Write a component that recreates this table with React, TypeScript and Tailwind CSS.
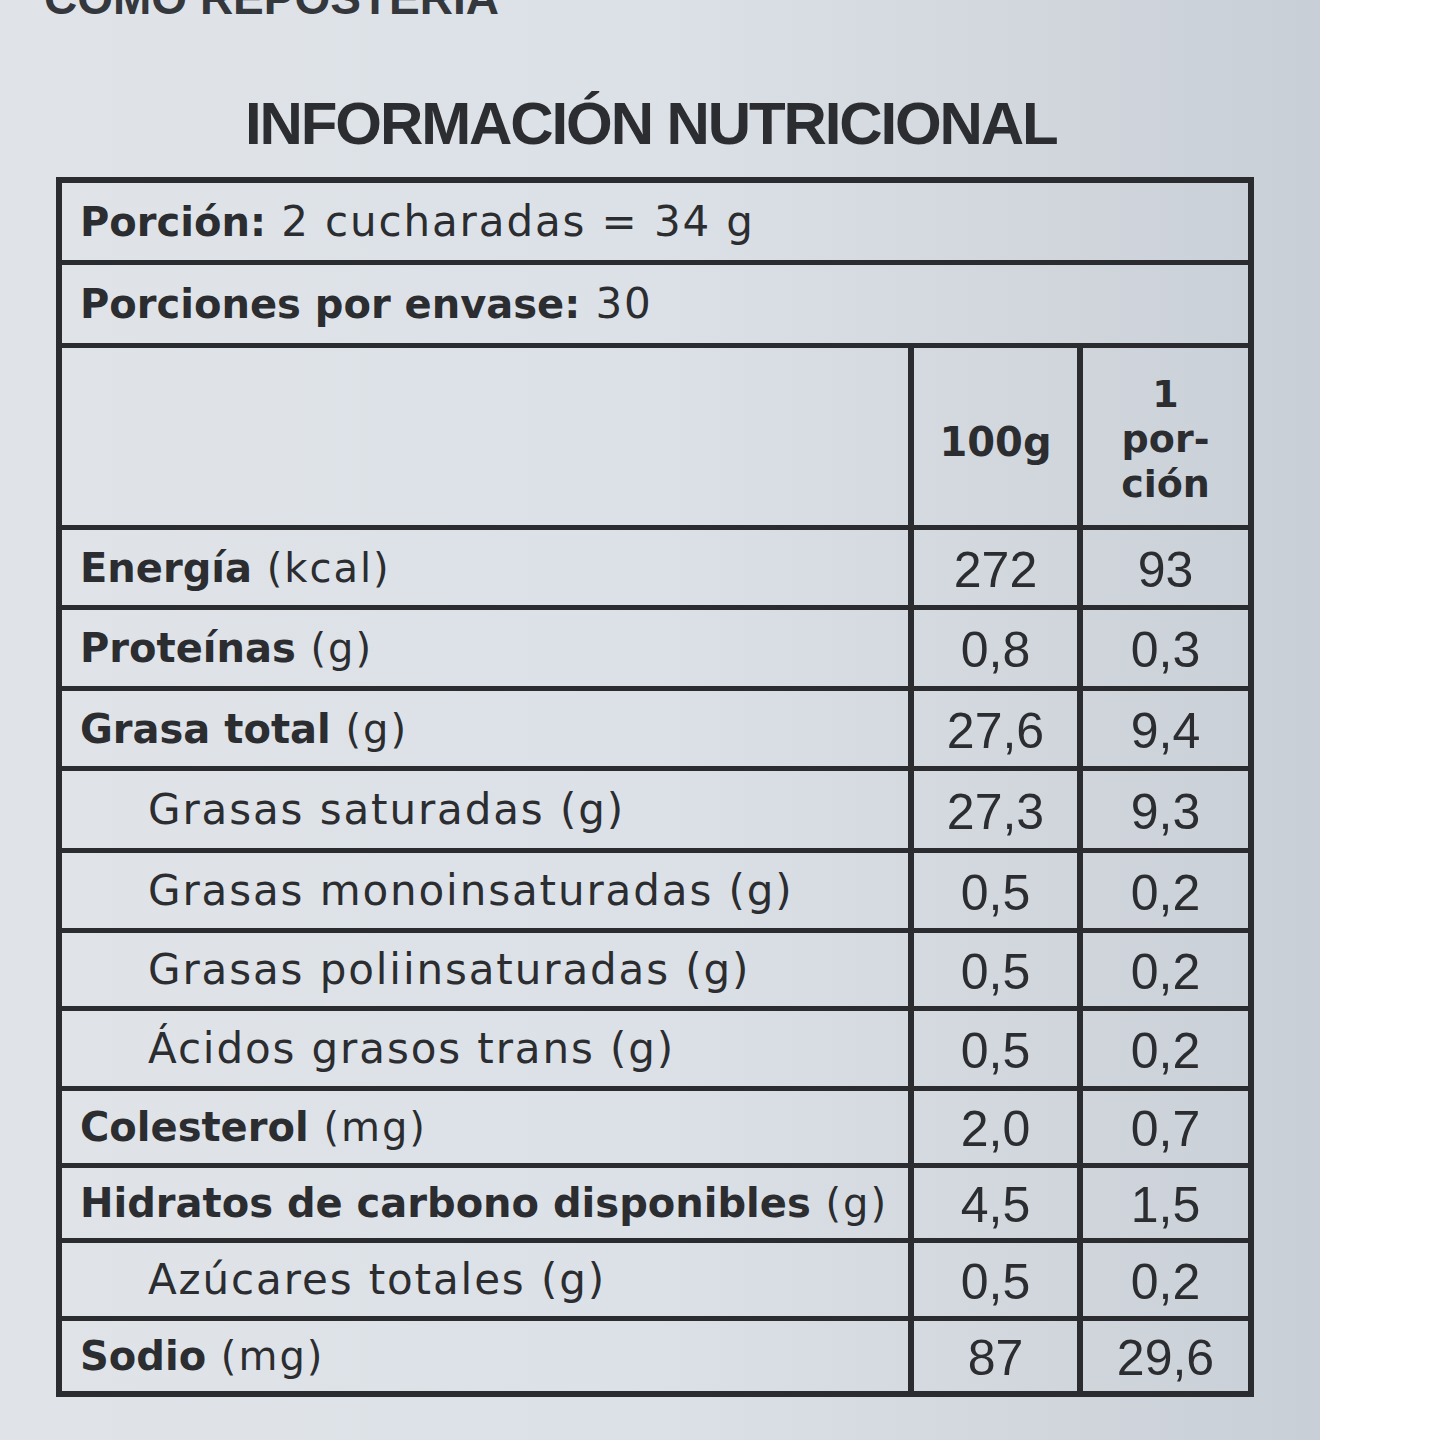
import React from 'react';

type Row = {
  label: string;
  unit: string;
  bold: boolean;
  indent?: boolean;
  a: string;
  b: string;
  h: string;
};

const rows: Row[] = [
  { label: 'Energía', unit: '(kcal)', bold: true, a: '272', b: '93', h: 'h-[80px]' },
  { label: 'Proteínas', unit: '(g)', bold: true, a: '0,8', b: '0,3', h: 'h-[81px]' },
  { label: 'Grasa total', unit: '(g)', bold: true, a: '27,6', b: '9,4', h: 'h-[80px]' },
  { label: 'Grasas saturadas', unit: '(g)', bold: false, indent: true, a: '27,3', b: '9,3', h: 'h-[82px]' },
  { label: 'Grasas monoinsaturadas', unit: '(g)', bold: false, indent: true, a: '0,5', b: '0,2', h: 'h-[80px]' },
  { label: 'Grasas poliinsaturadas', unit: '(g)', bold: false, indent: true, a: '0,5', b: '0,2', h: 'h-[78px]' },
  { label: 'Ácidos grasos trans', unit: '(g)', bold: false, indent: true, a: '0,5', b: '0,2', h: 'h-[80px]' },
  { label: 'Colesterol', unit: '(mg)', bold: true, a: '2,0', b: '0,7', h: 'h-[77px]' },
  { label: 'Hidratos de carbono disponibles', unit: '(g)', bold: true, a: '4,5', b: '1,5', h: 'h-[75px]' },
  { label: 'Azúcares totales', unit: '(g)', bold: false, indent: true, a: '0,5', b: '0,2', h: 'h-[78px]' },
  { label: 'Sodio', unit: '(mg)', bold: true, a: '87', b: '29,6', h: 'h-[75px]' },
];

const label = "font-['DejaVu_Sans',sans-serif] text-[40px] leading-none text-[#2b2d30]";
const num = "font-['Liberation_Sans',Arial,sans-serif] text-[50px] leading-none text-[#2b2d30]";

export default function App() {
  return (
    <div className="flex w-[1440px] h-[1440px] bg-white overflow-hidden">
      <div className="w-[1320px] h-full bg-gradient-to-r from-[#e0e4e9] via-[#dce1e7] to-[#c9cfd6]">
        {/* texto cortado arriba */}
        <div className="h-[20px] overflow-hidden pl-[44px]">
          <div className="mt-[-25px] font-['Liberation_Sans',Arial,sans-serif] font-bold text-[46px] leading-none text-[#34373b]">
            COMO REPOSTERÍA
          </div>
        </div>

        <h1 className="mt-[74px] ml-[245px] font-['Liberation_Sans',Arial,sans-serif] font-bold text-[60px] leading-none tracking-[-0.035em] text-[#2b2d30]">
          INFORMACIÓN NUTRICIONAL
        </h1>

        <div className="mt-[23px] ml-[56px] w-[1198px] border-[6px] border-[#2a2c2f]">
          <div className={`h-[77px] flex items-center pl-[18px] ${label}`}>
            <span className="font-bold">Porción:</span>
            <span className="text-[42px] tracking-[0.045em]">&nbsp;2 cucharadas = 34 g</span>
          </div>
          <div className={`h-[83px] border-t-[5px] border-[#2a2c2f] flex items-center pl-[18px] ${label}`}>
            <span className="font-bold">Porciones por envase:</span>
            <span className="text-[42px] tracking-[0.045em]">&nbsp;30</span>
          </div>

          <div className="h-[182px] border-t-[5px] border-[#2a2c2f] grid grid-cols-[846px_169px_1fr]">
            <div />
            <div className={`border-l-[6px] border-[#2a2c2f] flex items-center justify-center pt-[10px] ${label} font-bold`}>
              100g
            </div>
            <div className="border-l-[6px] border-[#2a2c2f] flex flex-col items-center justify-center pt-[6px] font-['DejaVu_Sans',sans-serif] text-[38px] leading-[45px] font-bold text-[#2b2d30]">
              <span>1</span>
              <span>por-</span>
              <span>ción</span>
            </div>
          </div>

          {rows.map((r) => (
            <div key={r.label} className={`${r.h} border-t-[5px] border-[#2a2c2f] grid grid-cols-[846px_169px_1fr]`}>
              <div className={`flex items-center ${r.indent ? 'pl-[86px]' : 'pl-[18px]'} ${label}`}>
                {r.bold ? (
                  <>
                    <span className="font-bold">{r.label}</span>
                    <span className="tracking-[0.05em]">&nbsp;{r.unit}</span>
                  </>
                ) : (
                  <span className="text-[42px] tracking-[0.045em]">
                    {r.label} {r.unit}
                  </span>
                )}
              </div>
              <div className={`border-l-[6px] border-[#2a2c2f] flex items-center justify-center pt-[4px] ${num}`}>
                {r.a}
              </div>
              <div className={`border-l-[6px] border-[#2a2c2f] flex items-center justify-center pt-[4px] ${num}`}>
                {r.b}
              </div>
            </div>
          ))}
        </div>
      </div>
    </div>
  );
}
